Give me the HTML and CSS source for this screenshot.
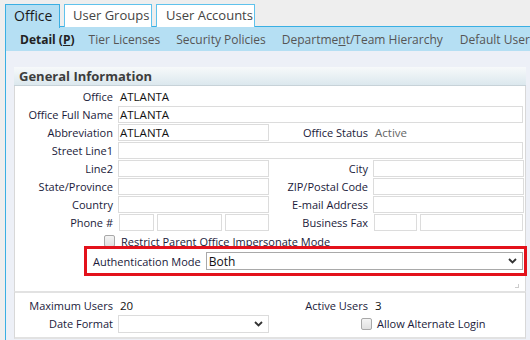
FILE: index.html
```html
<!DOCTYPE html>
<html>
<head>
<meta charset="utf-8">
<link rel="stylesheet" href="styles.css">
</head>
<body>
<div class="tabs">
  <div class="tab active">Office</div>
  <div class="tab groups">User Groups</div>
  <div class="tab accounts">User Accounts</div>
</div>
<div class="frame">
  <div class="subnav">
    <span class="sub current">Detail (<u>P</u>)</span>
    <span class="sub tier">Tier Licenses</span>
    <span class="sub sec">Security Policies</span>
    <span class="sub">Departme<u>n</u>t/Team Hierarchy</span>
    <span class="sub">Default User Settings</span>
  </div>
  <div class="content">
    <div class="panel">
      <div class="panel-head">General Information</div>
      <div class="panel-body">
        <div class="grid">
          <label class="lbl">Office</label>
          <div class="val span3">ATLANTA</div>

          <label class="lbl">Office Full Name</label>
          <div class="field span3"><div class="box">ATLANTA</div></div>

          <label class="lbl">Abbreviation</label>
          <div class="field"><div class="box">ATLANTA</div></div>
          <label class="lbl">Office Status</label>
          <div class="val muted">Active</div>

          <label class="lbl">Street Line1</label>
          <div class="field span3"><div class="box"></div></div>

          <label class="lbl">Line2</label>
          <div class="field"><div class="box"></div></div>
          <label class="lbl">City</label>
          <div class="field"><div class="box"></div></div>

          <label class="lbl">State/Province</label>
          <div class="field"><div class="box"></div></div>
          <label class="lbl">ZIP/Postal Code</label>
          <div class="field"><div class="box"></div></div>

          <label class="lbl">Country</label>
          <div class="field"><div class="box"></div></div>
          <label class="lbl">E-mail Address</label>
          <div class="field"><div class="box"></div></div>

          <label class="lbl">Phone #</label>
          <div class="field phone"><div class="box p1"></div><div class="box p2"></div><div class="box p3"></div></div>
          <label class="lbl">Business Fax</label>
          <div class="field fax"><div class="box f1"></div><div class="box f2"></div></div>

          <div class="lbl chk-cell"><span class="checkbox"></span></div>
          <div class="val span3 chk-text">Restrict Parent Office Impersonate Mode</div>
        </div>
        <div class="auth">
          <label class="auth-lbl">Authentication Mode</label>
          <div class="select wide">
            <span>Both</span>
            <svg class="chev" width="9" height="6" viewBox="0 0 9 6"><polyline points="1,1 4.5,4.5 8,1" fill="none" stroke="#333" stroke-width="1.8"/></svg>
          </div>
        </div>
        <div class="resize"></div>
      </div>
      <div class="panel-body lower">
        <div class="grid">
          <label class="lbl">Maximum Users</label>
          <div class="val">20</div>
          <label class="lbl">Active Users</label>
          <div class="val">3</div>

          <label class="lbl">Date Format</label>
          <div class="field">
            <div class="select">
              <span></span>
              <svg class="chev" width="9" height="6" viewBox="0 0 9 6"><polyline points="1,1 4.5,4.5 8,1" fill="none" stroke="#333" stroke-width="1.8"/></svg>
            </div>
          </div>
          <div class="lbl"></div>
          <div class="val alt"><span class="checkbox"></span><span>Allow Alternate Login</span></div>
        </div>
      </div>
    </div>
  </div>
</div>
</body>
</html>
```

FILE: styles.css
```css
* { box-sizing: border-box; }
html, body { margin: 0; padding: 0; }
body {
  background: #eeeeee;
  font-family: "Open Sans", "Noto Sans", sans-serif;
  color: #1a1a2e;
  width: 530px;
  height: 340px;
  overflow: hidden;
}
.tabs {
  display: flex;
  gap: 4px;
  padding: 4px 0 0 5px;
  height: 27px;
  position: relative;
  z-index: 2;
}
.tab {
  height: 23px;
  border: 1px solid #5fc2ec;
  border-bottom: none;
  background: #fff;
  color: #444;
  font-size: 13px;
  line-height: 21px;
  padding: 0 0 0 8px;
  white-space: nowrap;
}
.tab.groups { width: 88px; }
.tab.accounts { width: 99px; padding-left: 9px; }
.tab.active {
  width: 55px;
  background: #b5dff3;
  border-color: #3aafe3;
  color: #1a1a1a;
  height: 24px;
  font-size: 14px;
}
.frame {
  margin-left: 5px;
  margin-top: -1px;
  border-top: 1px solid #3aafe3;
  border-left: 1px solid #3aafe3;
  background: #edf0f7;
  height: 320px;
}
.subnav {
  background: #b5dff3;
  height: 24px;
  display: flex;
  align-items: center;
  padding-left: 14px;
  white-space: nowrap;
  overflow: hidden;
  font-size: 12px;
  color: #555;
}
.sub { margin-right: 17px; flex: none; }
.sub.current { color: #222; font-weight: bold; margin-right: 14px; }
.sub.tier { margin-right: 16px; }
.sub.sec { margin-right: 16px; }
.sub u { text-decoration: underline; }
.content {
  padding: 16px 0 0 8px;
}
.panel {
  width: 512px;
}
.panel-head {
  height: 19px;
  background: linear-gradient(#f7f9fa, #dce8ee);
  border-bottom: 1px solid #c7d2d8;
  font-weight: bold;
  font-size: 13px;
  color: #3d3d3d;
  padding-left: 5px;
  line-height: 19px;
}
.panel-body {
  background: #fff;
  border-left: 1px solid #d8d8d8;
  border-right: 1px solid #d8d8d8;
  padding: 2px 0 15px 0;
  position: relative;
}
.panel-body.lower {
  border-top: 2px solid #e2e2e2;
  border-bottom: 2px solid #e2e2e2;
  padding: 4px 0 4px 0;
}
.grid {
  display: grid;
  grid-template-columns: 103px 151px 104px 151px;
  grid-auto-rows: 18px;
  font-size: 11px;
}
.lbl {
  text-align: right;
  padding-right: 5px;
  line-height: 18px;
  color: #1a1a3a;
  white-space: nowrap;
}
.val {
  line-height: 18px;
  padding-left: 2px;
  color: #111;
  white-space: nowrap;
  font-size: 11.5px;
}
.val.muted { color: #666; }
.span3 { grid-column: span 3; }
.field {
  display: flex;
  align-items: flex-start;
}
.box {
  height: 17px;
  border: 1px solid #dcdcdc;
  flex: 1;
  font-size: 11.5px;
  line-height: 15px;
  padding-left: 1px;
  color: #111;
}
.field.span3 .box { margin-right: 1px; }
.phone { gap: 3px; padding-left: 1px; }
.phone .p1 { flex: 0 0 35px; }
.phone .p2 { flex: 0 0 65px; }
.phone .p3 { flex: 0 0 44px; }
.fax { gap: 3px; padding-left: 1px; padding-right: 1px; }
.fax .f1 { flex: 0 0 43px; }
.fax .f2 { flex: 1; }
.chk-cell {
  display: flex;
  justify-content: flex-end;
  align-items: center;
  padding-right: 3px;
}
.checkbox {
  display: inline-block;
  width: 11px;
  height: 12px;
  border: 1px solid #a8a8a8;
  border-radius: 2px;
  background: linear-gradient(#f4f4f4, #e0e0e0);
}
.chk-text { padding-left: 3px; margin-top: 1px; font-size: 11px; color: #1a1a3a; }
.auth {
  margin: -4px -2px 0 69px;
  border: 3px solid #e3111b;
  height: 30px;
  display: flex;
  align-items: center;
  padding: 0 1px 0 6px;
  font-size: 11px;
  position: relative;
  z-index: 1;
}
.auth-lbl { color: #1a1a3a; margin-right: 5px; white-space: nowrap; }
.select {
  height: 18px;
  border: 1px solid #a9a9a9;
  display: flex;
  align-items: center;
  justify-content: space-between;
  padding: 0 5px 0 2px;
  flex: 1;
  font-size: 12px;
  color: #111;
}
.lower .select { border-color: #dcdcdc; }
.chev { display: block; }
.resize {
  position: absolute;
  right: 6px;
  bottom: 3px;
  width: 4px;
  height: 4px;
  border-right: 1px solid #ccc;
  border-bottom: 1px solid #ccc;
}
.alt {
  display: flex;
  align-items: center;
  gap: 5px;
  padding-left: 0;
  margin-left: -12px;
  font-size: 11px;
  color: #1a1a3a;
}
```
